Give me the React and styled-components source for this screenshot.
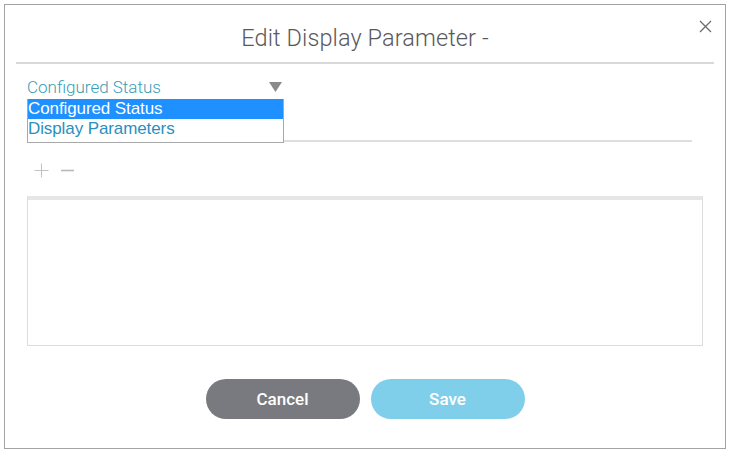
import React from "react";
import styled, { createGlobalStyle } from "styled-components";

const Global = createGlobalStyle`
  html, body { margin: 0; padding: 0; background: #fff; }
  body { font-family: Roboto, "Liberation Sans", Arial, sans-serif; }
`;

const Page = styled.div`
  padding: 4px 7px 0 4px;
`;

const Dialog = styled.div`
  position: relative;
  width: 720px;
  border: 1px solid #a3a3a3;
  background: #fff;
  display: flex;
  flex-direction: column;
`;

const Header = styled.div`
  margin: 0 11px;
  padding: 17px 0 10px;
  border-bottom: 2px solid #d9d9d9;
  display: flex;
  justify-content: center;
`;

const Title = styled.h1`
  margin: 0;
  font-family: Roboto, sans-serif;
  font-weight: 300;
  font-size: 23.5px;
  line-height: 30px;
  color: #59595c;
  letter-spacing: 0.1px;
  transform: translateY(1px);
`;

const CloseButton = styled.button`
  position: absolute;
  top: 9px;
  right: 8px;
  width: 24px;
  height: 24px;
  padding: 0;
  border: none;
  background: none;
  display: flex;
  align-items: center;
  justify-content: center;
  cursor: pointer;
`;

const Body = styled.div`
  padding: 12px 22px 29px;
  display: flex;
  flex-direction: column;
`;

const SelectWrap = styled.div`
  position: relative;
  width: 257px;
`;

const SelectRow = styled.div`
  height: 22px;
  display: flex;
  align-items: center;
  justify-content: space-between;
  padding-right: 2px;
`;

const SelectLabel = styled.span`
  font-family: Roboto, sans-serif;
  font-weight: 300;
  font-size: 17px;
  line-height: 22px;
  color: #3a9db6;
`;

const OptionList = styled.ul`
  position: absolute;
  top: 23px;
  left: 0;
  width: 257px;
  margin: 0;
  padding: 0;
  list-style: none;
  background: #fff;
  border: 1px solid #a9a9a9;
  border-top: none;
  box-sizing: border-box;
  height: 44px;
  z-index: 2;
`;

const Option = styled.li`
  height: 20px;
  padding-left: 0;
  font-family: "Liberation Sans", Arial, sans-serif;
  font-size: 17px;
  line-height: 20px;
  letter-spacing: -0.1px;
  background: ${(p) => (p.$active ? "#1e90ff" : "#fff")};
  color: ${(p) => (p.$active ? "#fff" : "#2a8fc0")};
`;

const TabLine = styled.div`
  height: 42px;
  margin-right: 11px;
  border-bottom: 2px solid #dedede;
`;

const Toolbar = styled.div`
  margin-top: 18px;
  height: 20px;
  display: flex;
  align-items: center;
  gap: 10px;
  padding-left: 6px;
`;

const IconButton = styled.button`
  padding: 0;
  border: none;
  background: none;
  width: 16px;
  height: 16px;
  display: flex;
  align-items: center;
  justify-content: center;
`;

const TableBox = styled.div`
  margin-top: 16px;
  height: 150px;
  box-sizing: border-box;
  border: 1px solid #dcdcdc;
  border-top: 4px solid #e6e6e6;
`;

const Actions = styled.div`
  margin-top: 33px;
  display: flex;
  justify-content: center;
  gap: 11px;
`;

const Button = styled.button`
  width: 154px;
  height: 40px;
  border: none;
  border-radius: 20px;
  background: ${(p) => (p.$primary ? "#80cfea" : "#797a7f")};
  color: #fff;
  font-family: Roboto, sans-serif;
  font-weight: 500;
  font-size: 17px;
  cursor: pointer;
`;

export default function App() {
  return (
    <>
      <Global />
      <Page>
        <Dialog>
          <Header>
            <Title>Edit Display Parameter -</Title>
          </Header>
          <CloseButton aria-label="Close">
            <svg width="13" height="13" viewBox="0 0 13 13">
              <path d="M1 1 L12 12 M12 1 L1 12" stroke="#6b6b6b" strokeWidth="1.3" fill="none" />
            </svg>
          </CloseButton>
          <Body>
            <SelectWrap>
              <SelectRow>
                <SelectLabel>Configured Status</SelectLabel>
                <svg width="13" height="10" viewBox="0 0 13 10">
                  <polygon points="0,0 13,0 6.5,10" fill="#8a8a8a" />
                </svg>
              </SelectRow>
              <OptionList>
                <Option $active>Configured Status</Option>
                <Option>Display Parameters</Option>
              </OptionList>
            </SelectWrap>
            <TabLine />
            <Toolbar>
              <IconButton aria-label="Add">
                <svg width="15" height="15" viewBox="0 0 15 15">
                  <path d="M7.5 0.5 V14.5 M0.5 7.5 H14.5" stroke="#c2c2c2" strokeWidth="1" fill="none" />
                </svg>
              </IconButton>
              <IconButton aria-label="Remove">
                <svg width="15" height="15" viewBox="0 0 15 15">
                  <path d="M1 7.5 H14" stroke="#b8b8b8" strokeWidth="1.6" fill="none" />
                </svg>
              </IconButton>
            </Toolbar>
            <TableBox />
            <Actions>
              <Button>Cancel</Button>
              <Button $primary>Save</Button>
            </Actions>
          </Body>
        </Dialog>
      </Page>
    </>
  );
}
